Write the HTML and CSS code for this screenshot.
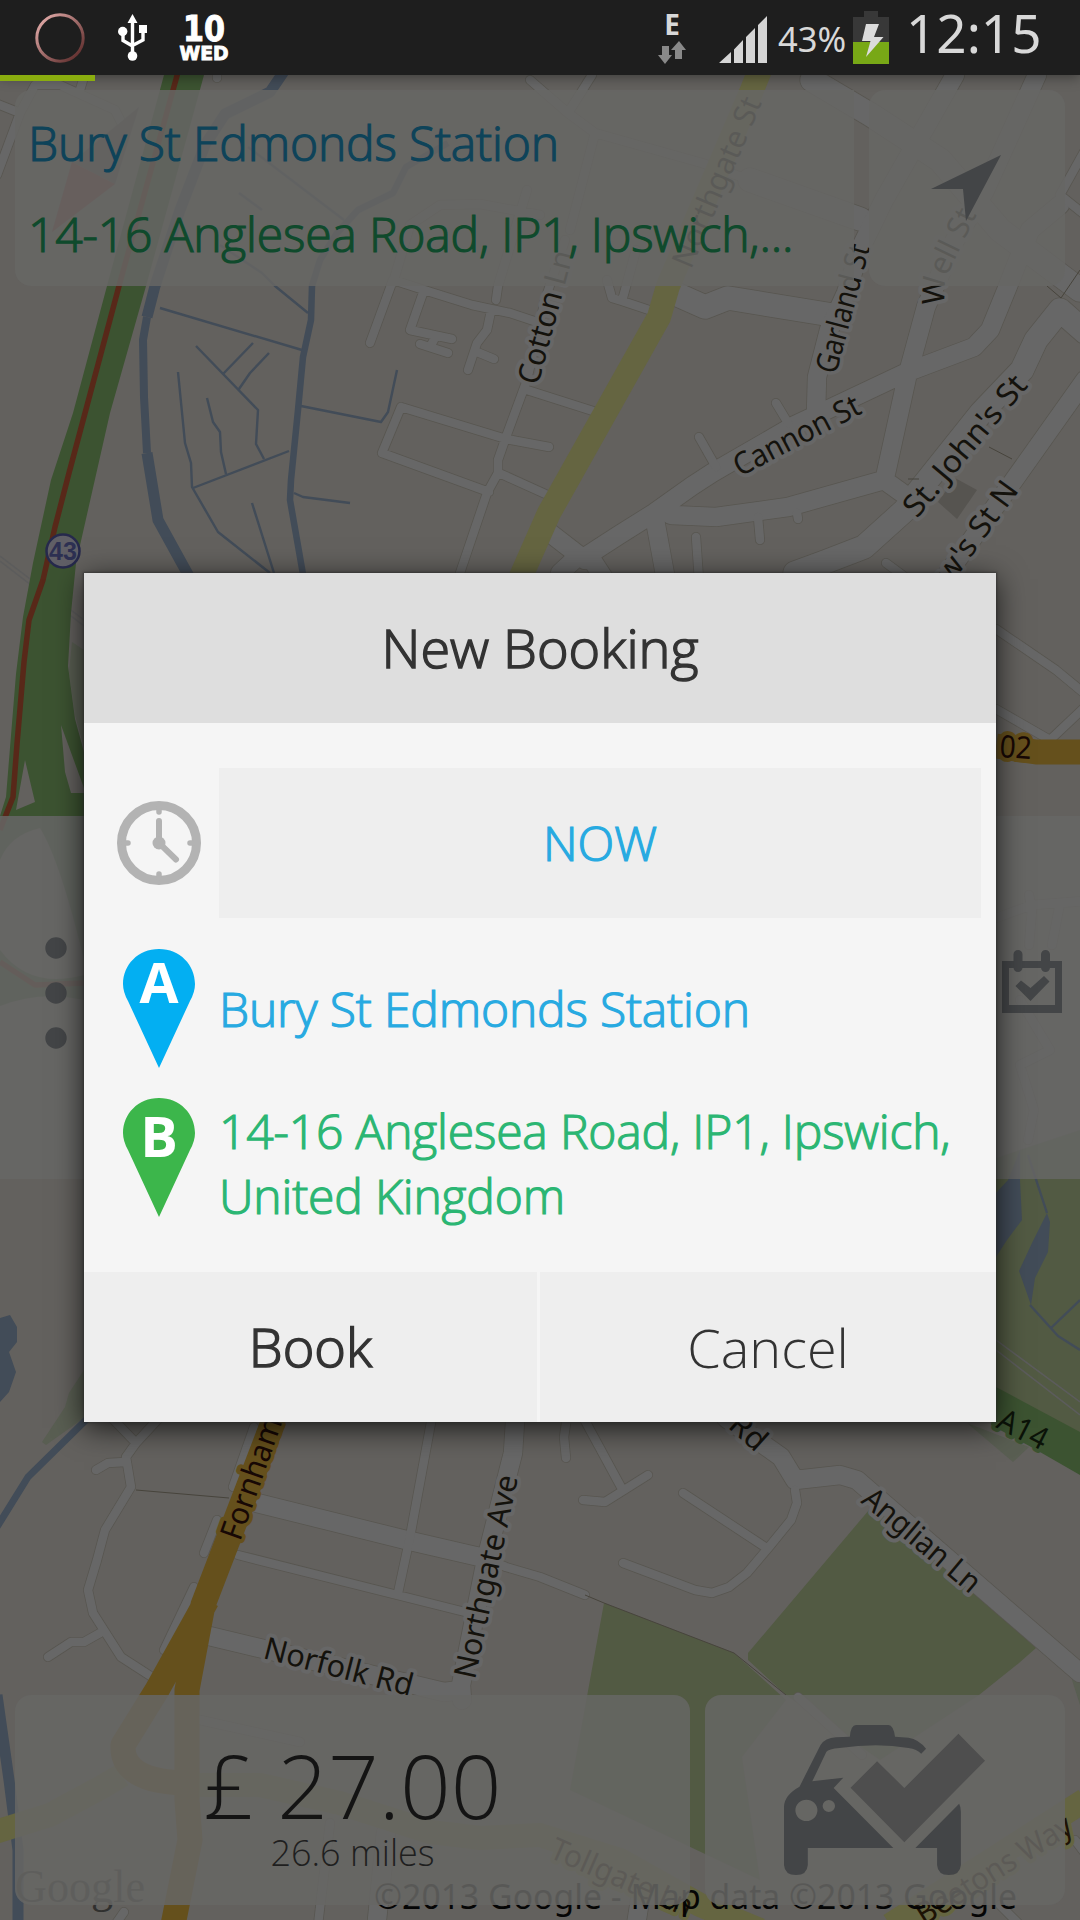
FILE: index.html
```html
<!DOCTYPE html>
<html lang="en">
<head>
<meta charset="utf-8">
<title>New Booking</title>
<link rel="stylesheet" href="styles.css">
</head>
<body>
<div class="screen">

  <svg class="map" width="1080" height="1920" viewBox="0 0 1080 1920" aria-hidden="true">
    <defs>
      <path id="wide" d="M678,295L705,307L728,298L832,315M812,80L871,115L940,160L1000,230L1080,290M750,180L860,219M795,573L825,562L864,547L905,510L914,497L981,413L1022,370L1036,340L1060,310L1085,332"/>
      <path id="main" d="M955,75L922,133L884,200L862,245L846,293L829,330L817,377L816,413M585,557L619,535L654,513L692,486L712,473L795,425L905,373L974,347L990,330L1008,286L1030,230L1060,205M1037,75L985,190L955,240L926,307L907,377L886,473M671,515L716,517L788,507L884,480L912,500M1085,380L943,580M550,533L585,560M574,560L560,573M592,560L605,580M655,520L666,580M257,1503L406,1540L484,1558M515,1422L513,1453L486,1560L461,1685L462,1700M205,1635L444,1692L461,1690M726,1418L781,1457L795,1480L840,1475L857,1480L880,1500L1080,1673M386,1833L377,1920M640,1900L636,1925"/>
      <path id="small" d="M393,280L370,343M393,280L424,290L472,305L510,313L540,323M393,283L410,225L440,205L480,204L540,215M527,190L498,286L496,300M424,290L410,330L452,339M420,344L448,353M436,336L430,347M491,311L487,330L477,343L468,370M477,352L494,359M401,407L506,439L549,447M401,407L382,453L489,492M565,240L545,300L527,380L506,437L498,460L498,473L487,493L460,573M527,390L593,411M499,473L552,497M699,437L716,467M776,403L788,423M758,517L760,540M797,513L798,519M696,537L699,580M886,563L905,577M592,75L568,113L595,133L702,163L750,180M595,133L570,230M530,80L568,113M607,280L612,298L622,301L655,312M622,301L636,250M1085,150L1060,195L1085,215M-5,103L20,113L35,85L60,85L115,110L125,130M80,90L86,70M20,113L-3,175M217,70L217,78M996,629L1056,670L1085,694M996,709L1050,740L1085,707M1029,895L1032,910L1029,945M996,918L1032,905L1085,901M1060,903L1052,945M1020,1000L1050,1050L1020,1065L1034,1110L1028,1140M111,1417L136,1443L160,1417M136,1443L126,1457L131,1487L105,1530L97,1560L88,1590L93,1613L121,1657L152,1677M125,1462L108,1463L96,1470M100,1633L84,1642L71,1642L48,1657M233,1487L254,1427M204,1553L217,1520M164,1650L194,1587M484,1558L506,1567L540,1577L585,1595M238,1555L465,1612M432,1417L410,1537L398,1593M567,1417L564,1437L566,1458M583,1417L621,1487M583,1500L605,1502L648,1475M683,1493L765,1547M795,1490L797,1503L791,1520L769,1547L747,1573L729,1587L712,1593L695,1590L623,1563M330,1823L318,1925M124,1912L115,1925M200,1720L300,1742M798,1697L862,1755M1000,1905L1020,1925M1075,1840L1090,1860"/>
      <path id="well-street" d="M944,305L945,280L976,216"/>
    </defs>

    <!-- parks, woods and water -->
    <path class="park" d="M604,1603L734,1653L786,1700L742,1757L760,1880L570,1790ZM869,1510L748,1653V1660L786,1695L880,1760L979,1695L1019,1663L1036,1648L885,1512ZM996,1158L1080,1130V1440L996,1392Z"/>
    <path class="meadow" d="M72,642L84,650V748L75,715L69,672ZM84,1370L69,1393L65,1407L42,1442L46,1445L84,1418ZM967,1423L1013,1462L1029,1447ZM1072,1680L1080,1672V1705Z"/>
    <path class="yard" d="M955,478L977,490L957,519L938,502Z"/>
    <path class="water-area" d="M1008,1180L1020,1150V1180L1022,1220L1007,1240L996,1257V1193ZM1047,1213L1050,1222L1048,1252L1035,1278L1031,1305L1019,1271L1032,1243ZM0,1318L10,1315L17,1327V1342L9,1352L16,1372L9,1392L0,1402Z"/>
    <path class="water w11" d="M285,70L270,92L225,114L205,145L180,210L155,286L147,317"/>
    <path class="water w8" d="M147,317L143,340L144,397L147,453"/>
    <path class="water w11" d="M147,453L158,520L191,580"/>
    <path class="water w6" d="M448,143L406,167L393,193L358,210L337,233L320,260L312,286L311,320L303,357L298,410L291,480L290,500L304,580"/>
    <path class="water w7" d="M88,1418L28,1477L-3,1527"/>
    <path class="water w11" d="M-3,1695L9,1780L18,1850V1920"/>
    <path class="water w2" d="M248,147L344,220M239,193L262,210M220,245L262,273L275,286L308,313M160,308L302,350M196,346L258,410L256,444L264,459M253,343L223,374M269,353L250,373L239,389M178,372L185,443L191,463L192,487L218,532L270,573M207,398L213,422L220,432L221,452L226,474M193,488L289,451M252,503L274,573M301,406L381,422L388,412L397,370M294,493L303,497L350,503M1028,1155L1047,1213M1030,1305L1058,1336L1080,1350M1051,1328L1080,1300"/>
    <path class="rail" d="M0,556L84,620M0,561L84,626M996,1340L1080,1402M996,1350L1080,1415"/>

    <!-- minor streets: outline first, then surface -->
    <g class="casing"><use href="#wide" class="c24"/><use href="#main" class="c19"/><use href="#small" class="c9"/></g>
    <g class="street"><use href="#wide" class="s24"/><use href="#main" class="s19"/><use href="#small" class="s9"/></g>
    <path class="footpath" d="M989,447L1012,459M136,1490L229,1498M585,1595L604,1603L734,1653L786,1695M1047,286L1061,298L1080,270M908,479H919"/>

    <!-- trunk road -->
    <path class="trunk" d="M164,75H204L146,286L110,413L76,563L71,613L68,666L75,719L84,752V816H0L6,797L16,674L23,617L33,563L51,480L73,413L107,286Z"/>
    <path class="land" d="M25,760L35,802L16,810ZM61,725L84,788V793H71L65,772Z"/>
    <path class="trunk" d="M0,816H84V960Q60,860 40,828Q10,835 0,860ZM0,950Q30,990 84,975V1000Q40,990 0,1006ZM996,1387L1080,1432V1475L1033,1448L991,1425Z"/>
    <path class="railway" d="M178,72L119,286L69,473L55,527L43,580L29,620L24,662L17,744L13,797L0,830M0,962L35,985L84,983"/>
    <path class="yellow" d="M760,70L752,90L668,286L659,317L549,513L515,590M-5,1832L50,1815L100,1788L122,1775M190,1785L260,1785L340,1803L430,1832L480,1838L540,1835L620,1860L700,1905L760,1930M1085,1800L890,1925"/>
    <path class="orange" d="M996,746L1036,752H1085M274,1420L228,1540L203,1605L187,1690L187,1800L190,1840L173,1925M207,1600L157,1690L123,1745Q121,1782 187,1783"/>

    <g class="shield">
      <circle cx="63" cy="551" r="16.5"/>
      <text x="63" y="560" text-anchor="middle">43</text>
    </g>
    <path class="compass-north" d="M139,107L72,162L115,184Z"/>
    <path class="compass-south" d="M72,162L115,184L52,232Z"/>

    <g class="label">
      <text transform="translate(538,386) rotate(-75)" textLength="137" lengthAdjust="spacingAndGlyphs">Cotton Ln</text>
      <text transform="translate(691,270) rotate(-67)" textLength="182" lengthAdjust="spacingAndGlyphs" class="plain">Northgate St</text>
      <text transform="translate(836,375) rotate(-75)" textLength="132" lengthAdjust="spacingAndGlyphs">Garland St</text>
      <text><textPath href="#well-street">Well St</textPath></text>
      <text transform="translate(740,477) rotate(-27.5)" textLength="139" lengthAdjust="spacingAndGlyphs">Cannon St</text>
      <text transform="translate(917,519) rotate(-50)" textLength="174" lengthAdjust="spacingAndGlyphs">St. John's St</text>
      <text transform="translate(951,585) rotate(-54)" textLength="117" lengthAdjust="spacingAndGlyphs">w's St N</text>
      <text transform="translate(475,1680) rotate(-78)" textLength="207" lengthAdjust="spacingAndGlyphs">Northgate Ave</text>
      <text transform="translate(262,1658) rotate(14.5)" textLength="153" lengthAdjust="spacingAndGlyphs">Norfolk Rd</text>
      <text transform="translate(727,1427) rotate(42)" textLength="39" lengthAdjust="spacingAndGlyphs">Rd</text>
      <text transform="translate(860,1502) rotate(40)" textLength="144" lengthAdjust="spacingAndGlyphs">Anglian Ln</text>
      <text class="on-orange" transform="translate(240,1542) rotate(-70.5)" textLength="128" lengthAdjust="spacingAndGlyphs">Fornham</text>
      <text class="on-orange" transform="translate(999,757) rotate(4)" textLength="32" lengthAdjust="spacingAndGlyphs">02</text>
      <text class="on-green" transform="translate(995,1427) rotate(27)" textLength="52" lengthAdjust="spacingAndGlyphs">A14</text>
      <text class="on-yellow" transform="translate(548,1857) rotate(23.5)" textLength="152" lengthAdjust="spacingAndGlyphs">Tollgate Ln</text>
      <text class="on-yellow" transform="translate(924,1926) rotate(-32)" textLength="178" lengthAdjust="spacingAndGlyphs">Beetons Way</text>
    </g>
    <text class="map-logo" x="15" y="1902" textLength="130" lengthAdjust="spacingAndGlyphs">Google</text>
    <text class="copyright" x="374" y="1909" textLength="643" lengthAdjust="spacingAndGlyphs">©2013 Google - Map data ©2013 Google</text>
  </svg>

  <header class="status">
    <svg class="ring" width="50" height="50" viewBox="0 0 50 50">
      <defs><linearGradient id="rg" x1="0" y1="0" x2="1" y2="1"><stop offset="0.1" stop-color="#dda6a4"/><stop offset="0.9" stop-color="#62302f"/></linearGradient></defs>
      <circle cx="25" cy="25" r="23.2" fill="none" stroke="url(#rg)" stroke-width="3"/>
    </svg>
    <svg class="usb" width="29" height="47" viewBox="0 0 29 47">
      <path fill="#fff" d="M14.500 0L19.500 9H9.500ZM21 11h8v8h-8z"/><circle cx="4.700" cy="17.500" r="4.700" fill="#fff"/><circle cx="14.500" cy="42" r="4.800" fill="#fff"/>
      <path fill="none" stroke="#fff" stroke-width="3.400" d="M14.500 6V42M5 18v8.500l9.500 5.500M25 17v9l-10.500 5.500"/>
    </svg>
    <svg class="date" width="52" height="50" viewBox="0 0 52 50">
      <text class="day" x="4" y="27" textLength="42" lengthAdjust="spacingAndGlyphs">10</text>
      <text class="weekday" x="0.500" y="45.500" textLength="49" lengthAdjust="spacingAndGlyphs">WED</text>
    </svg>
    <div class="network">
      <span>E</span>
      <svg width="28" height="23" viewBox="0 0 28 23"><path fill="#898989" d="M4 5h7v9h3L7 23L0 14h4ZM17 18h7V9h4L21 0L13 9h4Z"/></svg>
    </div>
    <svg class="signal" width="48" height="47" viewBox="0 0 48 47"><path fill="#d5d5d5" d="M0 47L12 36V47ZM15 47V33.500L24 24V47ZM27 47V21L36 12V47ZM39 47V9L48 0V47Z"/></svg>
    <span class="percent">43%</span>
    <svg class="battery" width="36" height="53" viewBox="0 0 36 53">
      <path fill="#383838" d="M11 0h14v6h11v25H0V6h11z"/><path fill="#78a816" d="M0 31h36v22H0z"/>
      <path fill="#dcdcdc" d="M13 13h13l-5 13h9.500L13 46l4.500-16H9z"/>
    </svg>
    <time class="clock">12:15</time>
  </header>
  <div class="progress"><div class="progress-value"></div></div>

  <main class="content">
    <section class="route">
      <div class="card addresses">
        <p class="from">Bury St Edmonds Station</p>
        <p class="to">14-16 Anglesea Road, IP1, Ipswich,...</p>
      </div>
      <div class="card locate">
        <svg width="70" height="66" viewBox="0 0 70 66"><path fill="#434547" d="M70 0L0 34H32L35 66Z"/></svg>
      </div>
    </section>

    <section class="drawers">
      <div class="more">
        <svg width="22" height="112" viewBox="0 0 22 112"><g fill="#434547"><circle cx="11" cy="11" r="10.700"/><circle cx="11" cy="56" r="10.700"/><circle cx="11" cy="101" r="10.700"/></g></svg>
      </div>
      <div class="schedule">
        <svg width="60" height="63" viewBox="0 0 60 63">
          <path fill="#434547" fill-rule="evenodd" d="M0 11h60v52H0zM7 18v37h46V18z"/>
          <path stroke="#434547" stroke-width="9" stroke-linecap="round" d="M16 4.500v13M43.500 4.500v13"/>
          <path fill="#434547" d="M13.500 36L19 30.500L28.500 38L42 26L47.500 31.500L28.500 51Z"/>
        </svg>
      </div>
    </section>

    <section class="summary">
      <div class="card fare">
        <p class="price">£ 27.00</p>
        <p class="distance">26.6 miles</p>
      </div>
      <div class="card order">
        <svg width="201" height="150" viewBox="709 555 583 450" preserveAspectRatio="none">
          <path fill="#434547" fill-rule="evenodd" d="M709 800Q710 765 754 740L815 615Q828 594 860 592L900 590Q903 555 918 555H1012Q1026 555 1031 590L1070 593Q1100 598 1121 626L1107 641Q1095 628 1070 624Q980 608 870 624Q838 627 832 635L791 724L881 713L853 744L1026 924H778V975Q776 1005 744 1005Q711 1005 709 975ZM742 811a32 32 0 1 0 64 0a32 32 0 1 0 -64 0M821 798a18 18 0 1 0 36 0a18 18 0 1 0 -36 0"/>
          <path fill="#434547" d="M1090 924L1217 791Q1222 800 1222 815V975Q1220 1005 1187 1005Q1155 1005 1153 975V924Z"/>
          <path fill="#4e4e4e" d="M902 743L979 664L1058 744L1215 581L1292 662L1058 907Z"/>
        </svg>
      </div>
    </section>
  </main>

  <div class="dialog" role="dialog">
    <h1 class="dialog-title">New Booking</h1>
    <div class="dialog-body">
      <svg class="icon" width="84" height="84" viewBox="0 0 84 84">
        <circle cx="42" cy="42" r="37.500" fill="none" stroke="#b3b3b3" stroke-width="9"/>
        <g fill="none" stroke="#b3b3b3" stroke-linecap="round"><path stroke-width="5.500" d="M42 7v4M42 73v4M7 42h4M73 42h4"/><path stroke-width="6" d="M42 20V42L59 58.500"/></g>
        <circle cx="42" cy="42" r="6.500" fill="#b3b3b3"/>
      </svg>
      <div class="when">NOW</div>
      <svg class="icon" width="72" height="119" viewBox="0 0 72 119">
        <path fill="#03aff2" d="M36 0C57 0 72 16 72 35Q72 43 67 52L36 119L5 52Q0 43 0 35C0 16 15 0 36 0Z"/>
        <text class="pin-letter" x="36" y="54" text-anchor="middle" textLength="39" lengthAdjust="spacingAndGlyphs">A</text>
      </svg>
      <p class="from">Bury St Edmonds Station</p>
      <svg class="icon" width="72" height="119" viewBox="0 0 72 119">
        <path fill="#3cb64b" d="M36 0C57 0 72 16 72 35Q72 43 67 52L36 119L5 52Q0 43 0 35C0 16 15 0 36 0Z"/>
        <text class="pin-letter" x="36" y="59" text-anchor="middle">B</text>
      </svg>
      <p class="to">14-16 Anglesea Road, IP1, Ipswich, United Kingdom</p>
    </div>
    <div class="actions">
      <button class="book">Book</button>
      <button class="cancel">Cancel</button>
    </div>
  </div>
</div>
</body>
</html>
```
FILE: styles.css
```css
* { box-sizing: border-box; }
body { margin: 0; font-family: "Open Sans", sans-serif; }
p, h1 { margin: 0; font-weight: 300; }

.screen {
  position: relative;
  display: flex;
  flex-direction: column;
  width: 1080px;
  height: 1920px;
  overflow: hidden;
  background: #63615e;
}

/* Map canvas behind the interface */
.map { position: absolute; inset: 0; }
.map path, .map use { fill: none; }
.map .park { fill: #525a43; }
.map .meadow { fill: #595e52; }
.map .yard { fill: #565450; }
.map .land { fill: #63615e; }
.map .trunk { fill: #3c5331; }
.map .water-area { fill: #424c58; }
.water { stroke: #424c58; stroke-linejoin: round; }
.w2 { stroke-width: 2.4; }
.w6 { stroke-width: 6.5; }
.w7 { stroke-width: 7; }
.w8 { stroke-width: 8; }
.w11 { stroke-width: 11; }
.casing { stroke: #585650; stroke-linecap: round; stroke-linejoin: round; }
.street { stroke: #676767; stroke-linecap: round; stroke-linejoin: round; }
.c24 { stroke-width: 25; } .s24 { stroke-width: 23.500; }
.c19 { stroke-width: 20; } .s19 { stroke-width: 18.500; }
.c9 { stroke-width: 10; } .s9 { stroke-width: 8.500; }
.footpath { stroke: #47443c; stroke-width: 1; }
.rail { stroke: #5c5c5c; stroke-width: 1.5; }
.railway { stroke: #582819; stroke-width: 5.500; stroke-linejoin: round; }
.yellow { stroke: #656541; stroke-width: 24; }
.orange { stroke: #65501c; stroke-width: 25; stroke-linejoin: round; }
.shield circle { fill: #605f66; stroke: #26294c; stroke-width: 2.500; }
.shield text { font: bold 25px "Liberation Sans", sans-serif; fill: #2d3052; }
.map .compass-north { fill: #4e4c4c; }
.map .compass-south { fill: #6a3434; }
.label {
  font: 31px "Noto Sans", sans-serif;
  fill: #14120c;
  stroke: #676767;
  stroke-width: 8;
  stroke-linejoin: round;
  paint-order: stroke;
}
.label .plain { stroke: none; }
.label .on-orange { fill: #170805; stroke: #65501c; }
.label .on-green { fill: #0b1208; stroke: #3c5331; }
.label .on-yellow { fill: #1d1205; stroke: #656541; }
.map-logo { font: 46px "Liberation Serif", serif; fill: #30302f; }
.copyright { font: 34px "Noto Sans", sans-serif; fill: #050505; }

/* Status bar */
.status {
  position: relative;
  display: flex;
  align-items: flex-start;
  height: 75px;
  padding-left: 35px;
  background: #1e1e1e;
  color: #d8d8d8;
  box-shadow: 0 2px 12px rgba(0, 0, 0, .4);
  font-family: "Noto Sans", sans-serif;
}
.ring { margin-top: 13px; }
.usb { margin: 14px 0 0 33px; }
.date { margin: 14px 0 0 32px; fill: #fff; font-family: "DejaVu Sans", sans-serif; font-weight: 700; }
.day { font-size: 35px; stroke: #fff; stroke-width: 1; }
.weekday { font-size: 20px; stroke: #fff; stroke-width: 1; }
.network { display: flex; flex-direction: column; align-items: center; width: 28px; margin: 8px 0 0 427px; }
.network span { height: 33px; font-size: 28px; font-weight: 700; line-height: 33px; }
.signal { margin: 16px 0 0 33px; }
.percent { margin: 16px 0 0 11px; width: 68px; font-size: 34.500px; line-height: 46px; white-space: nowrap; }
.battery { margin: 11px 0 0 7px; }
.clock { margin: 0 0 0 17px; font-size: 53px; line-height: 66px; }
.progress { position: relative; height: 6px; }
.progress-value { width: 95px; height: 6px; background: #8aad0f; }

/* Cards over the map */
.content {
  position: relative;
  display: flex;
  flex: 1;
  flex-direction: column;
  justify-content: space-between;
  padding: 9px 0 15px;
}
.card { border-radius: 16px; background: rgba(102, 102, 100, .86); }
.route, .summary { display: flex; gap: 15px; padding: 0 15px; }
.addresses {
  width: 839px;
  height: 196px;
  padding: 20px 13px;
  border-radius: 16px 0 0 16px;
}
.addresses p { height: 91px; white-space: nowrap; }
.from, .to { font-size: 48px; letter-spacing: -.17px; line-height: 65px; -webkit-text-stroke-width: 1.2px; }
.addresses .from { color: #0e4359; }
.addresses .to { color: #0f4a2c; }
.locate { display: flex; flex: 1; align-items: center; justify-content: center; }
.locate svg { margin-right: 2px; }
.drawers { display: flex; justify-content: space-between; height: 363px; margin-top: 14px; }
.more, .schedule { display: flex; width: 540px; align-items: center; background: rgba(102, 102, 101, .86); }
.more { padding-left: 45px; padding-bottom: 9px; }
.schedule { justify-content: flex-end; padding: 0 18px 32px 0; }
.summary { height: 210px; }
.fare { width: 675px; padding-top: 41px; text-align: center; color: #141414; }
.price { font-size: 89px; line-height: 98px; }
.distance { font-size: 36px; line-height: 37px; color: #1f1f1f; }
.order { display: flex; flex: 1; align-items: center; justify-content: center; }
.order svg { margin-right: 1px; }

/* Booking dialog */
.dialog {
  position: absolute;
  top: 573px;
  left: 84px;
  display: flex;
  flex-direction: column;
  width: 912px;
  height: 849px;
  background: #f5f5f5;
  box-shadow: 0 0 2px 1px rgba(40, 40, 40, .6), 0 6px 28px rgba(0, 0, 0, .75);
  color: #333;
}
.dialog-title {
  height: 150px;
  background: #dedede;
  font-size: 54px;
  line-height: 148px;
  text-align: center;
  -webkit-text-stroke-width: 1.5px;
}
.dialog-body {
  display: grid;
  flex: 1;
  grid-template-columns: 84px 1fr;
  grid-template-rows: 150px 119px auto;
  gap: 30.5px 18px;
  align-items: center;
  align-content: start;
  padding: 45px 15px 0 33px;
}
.icon { justify-self: center; }
.when {
  background: #eee;
  color: #27aae1;
  font-size: 48px;
  font-weight: 300;
  line-height: 150px;
  text-align: center;
  -webkit-text-stroke-width: 1.2px;
}
.dialog .from { color: #27aae1; }
.dialog .to, .dialog .icon:nth-of-type(3) { align-self: start; }
.dialog .to { color: #2bb673; }
.pin-letter { fill: #fff; font: bold 56px "Open Sans", sans-serif; }
.actions { display: grid; grid-template-columns: 453px 1fr; gap: 3px; height: 150px; }
.actions button { border: 0; padding: 0; background: #eee; color: #333; font: 300 54px "Open Sans", sans-serif; }
.actions .book { padding-bottom: 2px; -webkit-text-stroke-width: 1.5px; }
```
